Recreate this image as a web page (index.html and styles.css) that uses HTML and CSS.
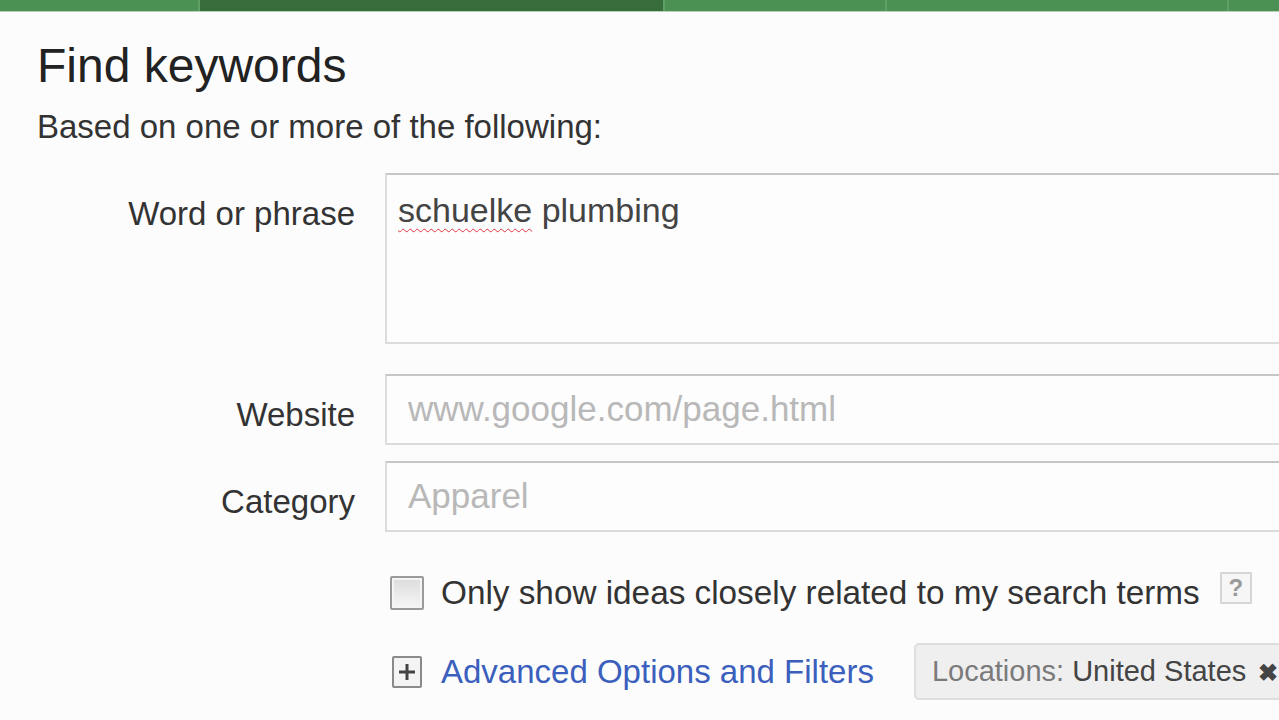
FILE: index.html
```html
<!DOCTYPE html>
<html lang="en">
<head>
    <meta charset="UTF-8">
    <meta name="viewport" content="width=device-width, initial-scale=1.0">
    <title>Find keywords</title>
    <link rel="stylesheet" href="styles.css">
</head>
<body>
    <div class="topbar">
        <div class="tab tab-a"></div>
        <div class="tab tab-b active"></div>
        <div class="tab tab-c"></div>
        <div class="tab tab-d"></div>
        <div class="tab tab-e"></div>
    </div>

    <div class="content">
        <h1 class="title">Find keywords</h1>
        <p class="subtitle">Based on one or more of the following:</p>

        <div class="form">
            <div class="label">Word or phrase</div>
            <div class="field textarea"><span class="misspelled">schuelke</span> plumbing</div>

            <div class="label">Website</div>
            <div class="field input placeholder">www.google.com/page.html</div>

            <div class="label">Category</div>
            <div class="field input placeholder">Apparel</div>

            <div></div>
            <div class="options">
                <div class="check-row">
                    <span class="checkbox"></span>
                    <span class="check-text">Only show ideas closely related to my search terms</span>
                    <span class="help">?</span>
                </div>
                <div class="advanced-row">
                    <span class="plus-box">
                        <svg width="26" height="26" viewBox="0 0 26 26">
                            <path d="M13 5v16M5 13h16" stroke="#444" stroke-width="3" fill="none"/>
                        </svg>
                    </span>
                    <a class="advanced-link" href="#">Advanced Options and Filters</a>
                    <div class="pill">
                        <span class="pill-key">Locations:</span> <span class="pill-value">United States</span> <span class="pill-close">&#10006;</span>
                    </div>
                </div>
            </div>
        </div>
    </div>
</body>
</html>
```

FILE: styles.css
```css
html, body {
    margin: 0;
    padding: 0;
}

body {
    font-family: Arial, "Liberation Sans", sans-serif;
    background-color: #fcfcfc;
    color: #333;
    width: 1279px;
    height: 720px;
    overflow: hidden;
}

.topbar {
    display: flex;
    height: 11px;
    border-bottom: 1px solid #b9cfb9;
}

.tab {
    background-color: #4b9154;
    border-right: 2px solid #5fa067;
}

.tab-a { width: 198px; }
.tab-b { width: 463px; }
.tab-c { width: 220px; }
.tab-d { width: 340px; }
.tab-e { flex: 1; border-right: none; }

.tab.active {
    background-color: #376d3a;
}

.content {
    padding-left: 37px;
}

.title {
    margin: 27px 0 0;
    font-size: 48px;
    font-weight: normal;
    line-height: 53px;
    color: #222;
}

.subtitle {
    margin: 16px 0 0;
    font-size: 33px;
    line-height: 38px;
    color: #333;
}

.form {
    display: grid;
    grid-template-columns: 318px 1000px;
    column-gap: 30px;
    margin-top: 27px;
}

.label {
    text-align: right;
    font-size: 33px;
    line-height: 38px;
    padding-top: 22px;
    color: #333;
}

.field {
    box-sizing: border-box;
    border: 2px solid #dcdcdc;
    border-top-color: #c6c6c6;
    background-color: #fdfdfd;
    font-size: 34px;
    color: #444;
}

.textarea {
    height: 171px;
    padding: 16px 11px 0;
    line-height: 38px;
    margin-bottom: 30px;
}

.misspelled {
    text-decoration: underline wavy #e0393e;
    text-decoration-thickness: 1px;
    text-underline-offset: 6px;
}

.input {
    height: 71px;
    padding: 0 21px;
    line-height: 66px;
    margin-bottom: 16px;
}

.placeholder {
    color: #b8b8b8;
    font-size: 35px;
}

.options {
    padding-top: 25px;
}

.check-row {
    display: flex;
    align-items: center;
    height: 40px;
    padding-left: 5px;
}

.checkbox {
    box-sizing: border-box;
    width: 34px;
    height: 34px;
    border: 2px solid #9a9a9a;
    border-radius: 2px;
    background: linear-gradient(#dcdcdc, #f6f6f6);
    box-shadow: inset 0 0 0 2px #f4f4f4;
}

.check-text {
    margin-left: 17px;
    font-size: 33.3px;
    color: #333;
}

.help {
    box-sizing: border-box;
    width: 32px;
    height: 32px;
    margin-left: 20px;
    margin-top: -10px;
    border: 2px solid #d6d6d6;
    background-color: #f6f6f6;
    color: #9a9a9a;
    font-size: 24px;
    font-weight: bold;
    text-align: center;
    line-height: 28px;
}

.advanced-row {
    display: flex;
    align-items: center;
    margin-top: 30px;
    padding-left: 7px;
}

.plus-box {
    box-sizing: border-box;
    width: 30px;
    height: 32px;
    border: 2px solid #8a8a8a;
    border-radius: 2px;
    background-color: #f4f4f4;
    display: flex;
    align-items: center;
    justify-content: center;
}

.advanced-link {
    margin-left: 19px;
    font-size: 33px;
    color: #3b5fbc;
    text-decoration: none;
}

.pill {
    box-sizing: border-box;
    height: 57px;
    margin-left: 40px;
    padding: 0 16px;
    border: 2px solid #dedede;
    border-radius: 5px;
    background-color: #efefef;
    font-size: 29px;
    line-height: 53px;
    white-space: nowrap;
}

.pill-key {
    color: #7a7a7a;
}

.pill-value {
    color: #444;
}

.pill-close {
    color: #444;
    font-size: 24px;
    font-weight: bold;
    margin-left: 4px;
}
```
